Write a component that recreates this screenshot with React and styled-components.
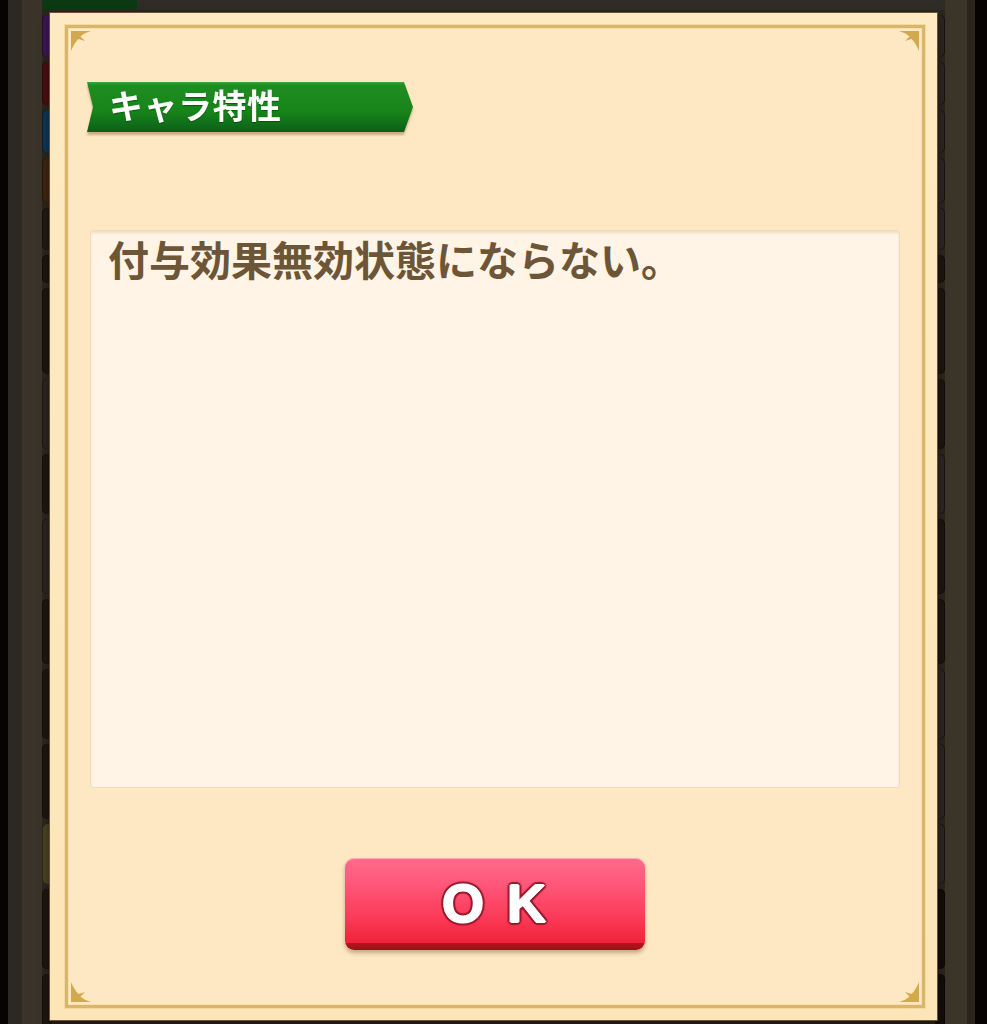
import React from "react";
import styled, { createGlobalStyle } from "styled-components";

const Global = createGlobalStyle`
  html, body { margin: 0; padding: 0; background: #000; }
  body { font-family: "Noto Sans CJK JP", "Noto Sans", sans-serif; }
`;

const Screen = styled.div`
  position: relative;
  width: 987px;
  height: 1024px;
  overflow: hidden;
  background: #2b251d;
`;

const Backdrop = styled.div`
  display: flex;
  height: 100%;
`;

const EdgeBlack = styled.div`
  width: ${(p) => p.$w}px;
  background: #050403;
  flex: none;
`;

const LeftRail = styled.div`
  width: 34px;
  flex: none;
  background: linear-gradient(to right, #2c2822 0 14px, #3a3329 14px 100%);
`;

const RightRail = styled.div`
  width: 30px;
  flex: none;
  background: linear-gradient(to right, #3b3428 0 22px, #2a241c 22px 100%);
`;

const Center = styled.div`
  flex: 1;
  display: flex;
  flex-direction: column;
  gap: 5px;
`;

const TopBar = styled.div`
  height: 10px;
  display: flex;
  flex: none;
  background: #2f2b26;
`;

const GreenTab = styled.div`
  width: 95px;
  background: #0b3a12;
`;

const Row = styled.div`
  height: ${(p) => p.$h}px;
  flex: none;
  display: flex;
  justify-content: space-between;
`;

const LeftCap = styled.div`
  width: 10px;
  border-radius: 5px 0 0 5px;
  background: ${(p) => p.$c};
  box-shadow: inset 1px 0 0 rgba(0, 0, 0, 0.4);
`;

const RightCap = styled.div`
  width: 10px;
  border-radius: 0 5px 5px 0;
  background: ${(p) => p.$c};
  box-shadow: inset -1px 0 0 rgba(0, 0, 0, 0.5);
`;

const Modal = styled.div`
  position: absolute;
  left: 50px;
  top: 13px;
  width: 887px;
  height: 1007px;
  box-sizing: border-box;
  padding: 12px 12px 12px 15px;
  background: linear-gradient(to bottom, #fdeac2, #fce6b8);
  box-shadow: 0 0 0 1px #6a5236, 0 4px 8px rgba(0, 0, 0, 0.5);
  display: flex;
`;

const Inner = styled.div`
  position: relative;
  flex: 1;
  display: flex;
  flex-direction: column;
  align-items: stretch;
  border: 3px solid #d9b66c;
  box-shadow: 0 0 0 1px #f4d9a0, inset 0 0 0 1px #f7dfae;
  background: #fee8c3;
  padding: 54px 22px 50px 22px;
`;

const Corner = styled.svg`
  position: absolute;
  width: 21px;
  height: 21px;
  ${(p) => (p.$top ? "top: 3px;" : "bottom: 3px;")}
  ${(p) => (p.$left ? "left: 3px;" : "right: 3px;")}
  transform: scale(${(p) => (p.$left ? 1 : -1)}, ${(p) => (p.$top ? 1 : -1)});
`;

const BannerWrap = styled.div`
  align-self: flex-start;
  margin-left: -3px;
  width: 326px;
  height: 50px;
  filter: drop-shadow(0 3px 1px rgba(120, 85, 40, 0.4));
`;

const BannerShape = styled.div`
  width: 100%;
  height: 100%;
  box-sizing: border-box;
  display: flex;
  align-items: center;
  padding-left: 22px;
  padding-bottom: 4px;
  clip-path: polygon(0 0, calc(100% - 9px) 0, 100% 50%, calc(100% - 9px) 100%, 0 100%, 6px 50%);
  background: linear-gradient(
    to bottom,
    #3aa83a 0,
    #1f8d22 3px,
    #168418 60%,
    #11701a 82%,
    #0c5e14 100%
  );
`;

const BannerText = styled.span`
  font-family: "Noto Sans CJK JP", "Noto Sans", sans-serif;
  font-weight: 700;
  font-size: 34px;
  line-height: 1;
  color: #ffffff;
  letter-spacing: 0.5px;
  text-shadow: 0 1px 1px rgba(0, 60, 0, 0.6);
`;

const TextBox = styled.div`
  margin-top: 98px;
  height: 558px;
  box-sizing: border-box;
  padding: 3px 17px;
  background: #fff4e5;
  border: 1px solid #efdcbc;
  border-radius: 3px;
  box-shadow: inset 0 2px 2px rgba(190, 160, 110, 0.25);
`;

const BodyText = styled.p`
  margin: 0;
  font-family: "Noto Sans CJK JP", "Noto Sans", sans-serif;
  font-weight: 700;
  font-size: 41px;
  line-height: 1.2;
  color: #6d5637;
`;

const OkButton = styled.button`
  align-self: center;
  margin-top: 70px;
  width: 300px;
  height: 92px;
  padding: 0 0 6px 0;
  border: none;
  border-radius: 9px;
  background: linear-gradient(
      to bottom,
      #ff6a8c 0%,
      #ff5679 30%,
      #fb3a58 65%,
      #f2243c 90%,
      #f2243c 92%,
      #b8141f 92%,
      #9c1018 100%
    );
  box-shadow: 0 3px 4px rgba(90, 40, 20, 0.35), inset 0 1px 0 rgba(255, 200, 210, 0.7);
  display: flex;
  align-items: center;
  justify-content: center;
  cursor: pointer;
`;

const OkLabel = styled.span`
  font-family: "Liberation Sans", Arial, sans-serif;
  font-weight: 700;
  font-size: 54px;
  line-height: 1;
  letter-spacing: 4px;
  margin-left: 2px;
  margin-top: 4px;
  color: #ffffff;
  text-shadow:
    1px 0 0 #fff, -1px 0 0 #fff, 0 1px 0 #fff, 0 -1px 0 #fff,
    3px 0 1px #9a1a2c, -3px 0 1px #9a1a2c, 0 3px 1px #9a1a2c, 0 -3px 1px #9a1a2c,
    2px 2px 1px #9a1a2c, -2px 2px 1px #9a1a2c, 2px -2px 1px #9a1a2c, -2px -2px 1px #9a1a2c;
`;

const leftRows = [
  [42, "#3b1752"], [43, "#4b0d12"], [43, "#0e3652"], [45, "#3e2610"], [42, "#211a13"],
  [28, "#1c1510"], [86, "#1e1610"], [70, "#2a2520"], [60, "#1e1610"], [75, "#2a2520"],
  [65, "#1e1610"], [70, "#1e1610"], [75, "#1e1610"], [60, "#4a4222"], [80, "#1e1610"],
  [80, "#1e1610"],
];

const rightColors = [
  "#2a2622", "#2a2622", "#2a2622", "#2a2622", "#2a2622",
  "#1c1610", "#1c1610", "#1c1610", "#2a2622", "#1c1610",
  "#1c1610", "#2a2622", "#2a2622", "#2a2622", "#120d09", "#120d09",
];

function CornerMark(props) {
  return (
    <Corner viewBox="0 0 21 21" {...props}>
      <path
        d="M0 0 L20 0 C15 1.5 11.5 3.5 9.5 5.5 L14 10 L7.5 8 C5 10.5 2.5 14 0 20 Z"
        fill="#d2a94e"
      />
    </Corner>
  );
}

export default function App() {
  return (
    <>
      <Global />
      <Screen>
        <Backdrop>
          <EdgeBlack $w={8} />
          <LeftRail />
          <Center>
            <TopBar>
              <GreenTab />
            </TopBar>
            {leftRows.map(([h, c], i) => (
              <Row key={i} $h={h}>
                <LeftCap $c={c} />
                <RightCap $c={rightColors[i]} />
              </Row>
            ))}
          </Center>
          <RightRail />
          <EdgeBlack $w={12} />
        </Backdrop>

        <Modal role="dialog">
          <Inner>
            <CornerMark $top $left />
            <CornerMark $top />
            <CornerMark $left />
            <CornerMark />
            <BannerWrap>
              <BannerShape>
                <BannerText>キャラ特性</BannerText>
              </BannerShape>
            </BannerWrap>
            <TextBox>
              <BodyText>付与効果無効状態にならない。</BodyText>
            </TextBox>
            <OkButton type="button">
              <OkLabel>O K</OkLabel>
            </OkButton>
          </Inner>
        </Modal>
      </Screen>
    </>
  );
}
